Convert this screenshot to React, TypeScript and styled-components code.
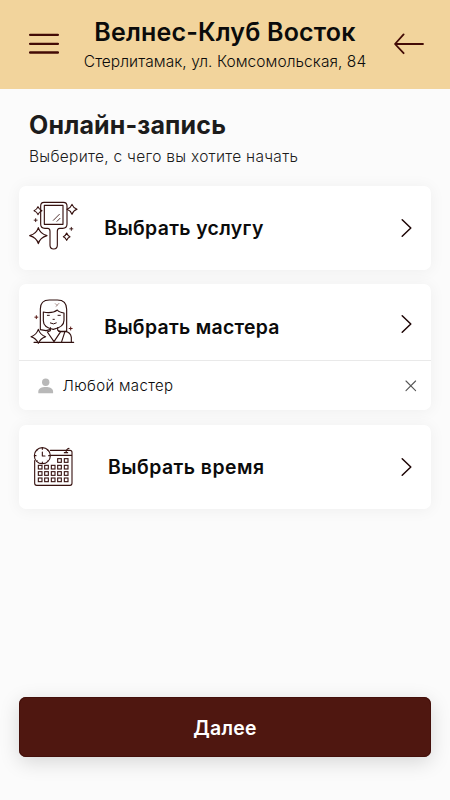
import React from "react";
import styled, { createGlobalStyle } from "styled-components";

const maroon = "#4f1710";

const GlobalStyle = createGlobalStyle`
  * { box-sizing: border-box; }
  body {
    margin: 0;
    background: #fbfbfb;
    color: #0b0b0b;
    font-family: Inter, "Noto Sans", sans-serif;
  }
  button { font: inherit; color: inherit; border: 0; padding: 0; background: none; cursor: pointer; }
  svg { display: block; }
`;

const Page = styled.div`
  height: 800px;
  display: flex;
  flex-direction: column;
  background: #fbfbfb;
`;

const Header = styled.header`
  height: 89px;
  flex: none;
  display: flex;
  justify-content: space-between;
  padding: 0 26px 0 29px;
  background: #f2d49c;
`;

const HeaderButton = styled.button`
  height: 88px;
  flex: none;
`;

const Brand = styled.div`
  display: flex;
  flex-direction: column;
  align-items: center;
  margin-left: -3px;
  padding-top: 16px;
  white-space: nowrap;
`;

const BrandName = styled.div`
  font-size: 25px;
  line-height: 32px;
  font-weight: 580;
  letter-spacing: 0.18px;
`;

const BrandAddress = styled.div`
  font-size: 15.5px;
  line-height: 27px;
  font-weight: 350;
  letter-spacing: 0.06px;
`;

const Content = styled.main`
  flex: 1;
  display: flex;
  flex-direction: column;
  padding: 19px 19px 43px;
`;

const Title = styled.h1`
  margin: 0 0 0 10px;
  font-size: 25px;
  line-height: 34px;
  font-weight: 680;
  letter-spacing: 0.15px;
  color: #1c1c1c;
  white-space: nowrap;
`;

const Subtitle = styled.p`
  margin: 2px 0 17px 10px;
  font-size: 15.5px;
  line-height: 25px;
  font-weight: 350;
  letter-spacing: 0.28px;
  color: #1c1c1c;
  white-space: nowrap;
`;

const CardList = styled.div`
  display: flex;
  flex-direction: column;
  gap: 14.4px;
`;

const Card = styled.section`
  background: #fff;
  border-radius: 7px;
  box-shadow: 0 1px 16px rgba(0, 0, 0, 0.055);
`;

const CardRow = styled.button<{ $height: number }>`
  width: 100%;
  height: ${(p) => p.$height}px;
  display: flex;
  align-items: center;
  padding: 0 19px 0 10px;
  text-align: left;
`;

const CardLabel = styled.span<{ $start: number; $drop?: number; $spacing: number }>`
  flex: 1;
  padding-left: ${(p) => p.$start}px;
  padding-top: ${(p) => p.$drop ?? 0}px;
  font-size: 19.4px;
  line-height: 28px;
  font-weight: 570;
  letter-spacing: ${(p) => p.$spacing}px;
  white-space: nowrap;
`;

const ChevronBox = styled.span<{ $drop?: number }>`
  padding-top: ${(p) => p.$drop ?? 0}px;
`;

const Choice = styled.div`
  height: 50px;
  display: flex;
  align-items: center;
  padding: 0 14px 0 19px;
  border-top: 1px solid #e9e9e9;
`;

const ChoiceName = styled.span`
  flex: 1;
  padding-left: 8.5px;
  font-size: 15px;
  line-height: 20px;
  font-weight: 350;
  letter-spacing: 0.35px;
`;

const NextButton = styled.button`
  height: 60px;
  margin-top: auto;
  border-radius: 7px;
  background: ${maroon};
  box-shadow: inset 0 0 0 1px #44100b, 0 5px 20px rgba(0, 0, 0, 0.15);
  color: #fff;
  font-size: 19.4px;
  line-height: 28px;
  font-weight: 560;
  letter-spacing: 0.25px;
  padding-top: 2px;
`;

const MenuIcon = () => (
  <svg width="30" height="22" viewBox="0 0 30 22" stroke="#430b06" strokeWidth="2.3" strokeLinecap="round">
    <path d="M1.1 1.9h27.8M1.1 10.8h27.8M1.1 19.5h27.8" />
  </svg>
);

const BackIcon = () => (
  <svg width="30" height="22" viewBox="0 0 30 22" fill="none" stroke="#430b06" strokeWidth="1.8" strokeLinecap="round" strokeLinejoin="round">
    <path d="M29 11H1.2M9.6 1.4 1 11l8.6 9.2" />
  </svg>
);

const Chevron = () => (
  <svg width="12" height="20" viewBox="0 0 12 20" fill="none" stroke="#1d0505" strokeWidth="1.5" strokeLinecap="round" strokeLinejoin="round">
    <path d="M2.2 1.7 10.8 10 2.2 18.3" />
  </svg>
);

const CloseIcon = () => (
  <svg width="12" height="12" viewBox="0 0 12 12" stroke="#555" strokeWidth="1.1" strokeLinecap="round">
    <path d="m1 1 9.6 9.6M10.6 1 1 10.6" />
  </svg>
);

const PersonIcon = () => (
  <svg width="16" height="16" viewBox="0 0 16 16" fill="#b8b8b8">
    <circle cx="7.7" cy="4.3" r="3.7" />
    <path d="M.3 15.2v-1.5c0-3.3 3.6-4.7 7.4-4.7s7.4 1.4 7.4 4.7v1.5z" />
  </svg>
);

const MirrorIcon = () => (
  <svg width="50" height="58" viewBox="27 27 150 174" fill="none" stroke="#36110f" strokeWidth="3.4" strokeLinejoin="round" strokeLinecap="round">
    <path d="M72 37h58q11 0 11 11v54q0 13-13 13h-9q-7 0-7 9v42q0 11-11 11t-11-11v-42q0-9-7-9H75q-13 0-13-13V48q0-11 10-11z" />
    <path d="M73 46h56v57H73z" />
    <path d="m100 91 18-18M111 94l9-9" strokeWidth="2.6" />
    <path d="M55 113q5 18 26 24-21 6-26 24-5-18-26-24 21-6 26-24z" />
    <path d="M54 50q3 9 12 12-9 3-12 12-3-9-12-12 9-3 12-12zM156 43q4 11 15 15-11 4-15 15-4-11-15-15 11-4 15-15zM140 129q3 8 10 11-7 3-10 11-3-8-10-11 7-3 10-11z" />
    <path d="M47 86v9M42.500 90.500h9M154 112v9M149.500 116.500h9" strokeWidth="2.800" />
  </svg>
);

const MasterIcon = () => (
  <svg width="50" height="48" viewBox="27 24 150 144" fill="none" stroke="#30100f" strokeWidth="3.4" strokeLinejoin="round" strokeLinecap="round">
    <path d="M61 119V57q0-27 27-27h24q28 0 28 28v66H116M61 119l17 3 12-3" />
    <path d="M70 66v26q0 20 30 26 32-6 32-27V69q-15-2-20-9-10 8-26 8-8 0-16-2z" />
    <path d="m106 41 5 5 6-6M112 46l-4 3" strokeWidth="2" stroke="#805d58" />
    <path d="M82 76h6M114 76h7M99 88h4M91 99q10 6 18 0" strokeWidth="3" />
    <path d="M91 113v9l-9 4 20 29 20-30-9-4v-8M122 125l13-1q17 2 19 18v13M135 124l-10 31" />
    <path d="M42 157h119" />
    <path d="M55 118q6 17 22 22-16 5-22 20-6-15-22-20 16-5 22-22z" fill="#fff" />
    <path d="M49 77v9M44.500 81.500h9M152 111v9M147.500 115.500h9" strokeWidth="3" stroke="#5a1b17" />
  </svg>
);

const dayCells = [
  [113, 71], [133, 71],
  ...[91, 110, 129].flatMap((y) => [55, 74, 94, 113, 133].map((x) => [x, y])),
];

const CalendarIcon = () => (
  <svg width="50" height="44" viewBox="27 30 150 132" fill="none" stroke="#36110f" strokeWidth="3.3" strokeLinejoin="round" strokeLinecap="round">
    <path d="M91 46h59q6 0 6 6v93q0 6-6 6H50q-6 0-6-6V77M91 61h65" />
    <path d="M147 40q-8 1-9 13M133 53h10" />
    {dayCells.map(([x, y]) => (
      <rect key={`${x}-${y}`} x={x} y={y} width="11" height="11" strokeWidth="3.3" strokeLinejoin="miter" />
    ))}
    <circle cx="67" cy="62" r="24" fill="#fff" />
    <path d="M67 51v12h8M67 39v4M67 81v4M44 62h4M86 62h4" />
    <path d="m51 46 1.500 1.500M83 46l-1.500 1.500M51 78l1.500-1.500M83 78l-1.500-1.500" strokeWidth="2" />
  </svg>
);

export default function App() {
  return (
    <>
      <GlobalStyle />
      <Page>
        <Header>
          <HeaderButton aria-label="Меню"><MenuIcon /></HeaderButton>
          <Brand>
            <BrandName>Велнес-Клуб Восток</BrandName>
            <BrandAddress>Стерлитамак, ул. Комсомольская, 84</BrandAddress>
          </Brand>
          <HeaderButton aria-label="Назад"><BackIcon /></HeaderButton>
        </Header>
        <Content>
          <Title>Онлайн-запись</Title>
          <Subtitle>Выберите, с чего вы хотите начать</Subtitle>
          <CardList>
            <Card>
              <CardRow $height={84}>
                <MirrorIcon />
                <CardLabel $start={25.3} $spacing={0.36}>Выбрать услугу</CardLabel>
                <ChevronBox><Chevron /></ChevronBox>
              </CardRow>
            </Card>
            <Card>
              <CardRow $height={76}>
                <MasterIcon />
                <CardLabel $start={25.3} $drop={9} $spacing={0.3}>Выбрать мастера</CardLabel>
                <ChevronBox $drop={4}><Chevron /></ChevronBox>
              </CardRow>
              <Choice>
                <PersonIcon />
                <ChoiceName>Любой мастер</ChoiceName>
                <button aria-label="Убрать"><CloseIcon /></button>
              </Choice>
            </Card>
            <Card>
              <CardRow $height={84}>
                <CalendarIcon />
                <CardLabel $start={29} $spacing={0.48}>Выбрать время</CardLabel>
                <ChevronBox><Chevron /></ChevronBox>
              </CardRow>
            </Card>
          </CardList>
          <NextButton>Далее</NextButton>
        </Content>
      </Page>
    </>
  );
}
